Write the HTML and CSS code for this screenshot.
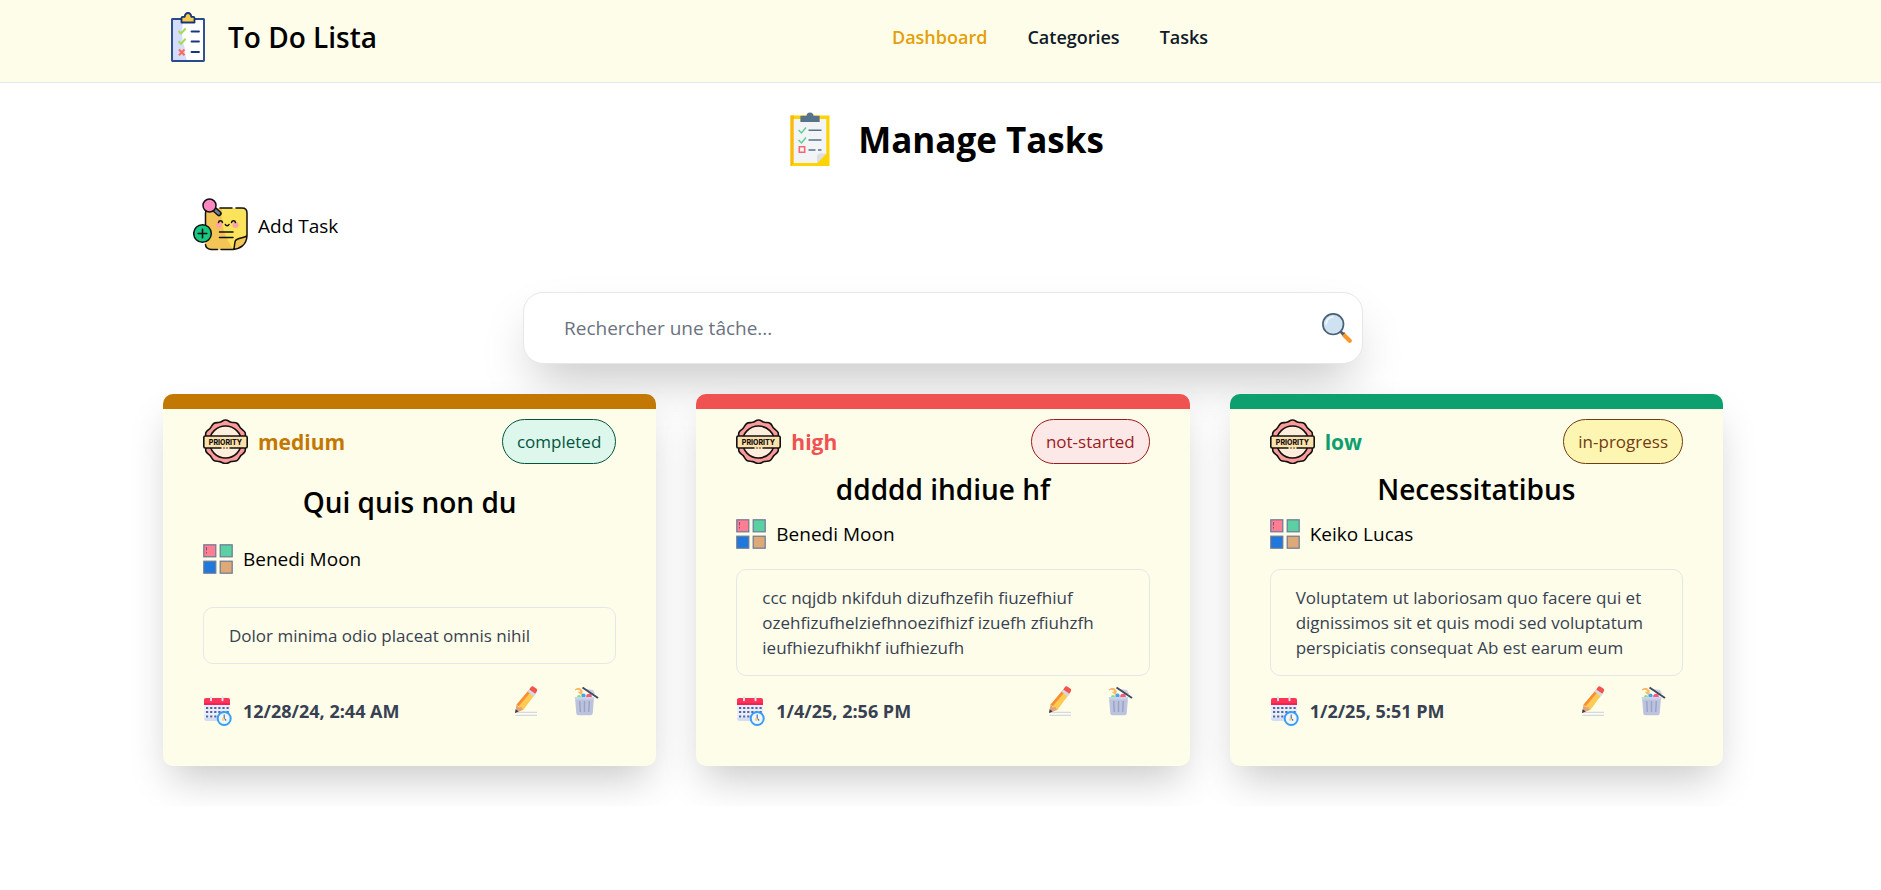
FILE: index.html
```html
<!DOCTYPE html>
<html lang="fr">
<head>
<meta charset="utf-8">
<meta name="viewport" content="width=device-width, initial-scale=1">
<title>To Do Lista</title>
<link rel="stylesheet" href="styles.css">
</head>
<body>
<svg class="sprite" aria-hidden="true">
  <symbol id="i-priority" viewBox="0 0 45 45">
    <path d="M22.500 1c2.600 0 3.600 1.800 5.800 2.300s4.300-.1 6 1.200 2 3.200 3.500 4.800 3.600 2.300 4.300 4.300-.2 3.700.3 5.600 1.600 2.200 1.600 3.800-1.100 2-1.600 3.800.4 3.700-.4 5.600-2.800 2.600-4.200 4.200-1.700 3.500-3.500 4.700-3.800.7-6 1.300-3.200 1.900-5.800 1.900-3.600-1.400-5.800-1.900-4.200 0-6-1.300-2.100-3.100-3.500-4.700-3.500-2.300-4.200-4.200.1-3.700-.4-5.600S1 25 1 23s1.100-2 1.600-3.800-.4-3.700.3-5.600 2.900-2.700 4.300-4.300 1.800-3.600 3.500-4.800 3.800-.7 6-1.200S19.900 1 22.500 1z" fill="#fd9a9a" stroke="#111" stroke-width="1.600"/>
    <circle cx="22.500" cy="23" r="16" fill="#ffeedb" stroke="#111" stroke-width="1.600"/>
    <rect x=".8" y="17" width="43.400" height="12" rx="1.500" fill="#ffe1ac" stroke="#111" stroke-width="1.600"/>
    <path d="M18.500 29h8" stroke="#ffe1ac" stroke-width="2"/><path d="M20.500 29h1M23.500 29h1" stroke="#111" stroke-width="1.600"/>
    <text x="22.500" y="25.500" text-anchor="middle" class="stamp">PRIORITY</text>
  </symbol>
  <symbol id="i-category" viewBox="0 0 30 30">
    <g stroke="#6c7894" stroke-width="1.200">
      <rect x=".8" y=".8" width="12" height="12" fill="#ff7e92"/>
      <rect x="17.200" y=".8" width="12" height="12" fill="#5bd0a3"/>
      <rect x=".8" y="17.200" width="12" height="12" fill="#2077dc"/>
      <rect x="17.200" y="17.200" width="12" height="12" fill="#dda977"/>
    </g>
    <path d="M3.500 3v3.500M3.500 8v1.500" stroke="#8d4f74"/>
  </symbol>
  <symbol id="i-calendar" viewBox="0 0 30 30">
    <path d="M1 8h26v14a3 3 0 0 1-3 3H4a3 3 0 0 1-3-3z" fill="#e9eefc"/>
    <path d="M1 22h20v3H4a3 3 0 0 1-3-3z" fill="#d5dcf6"/>
    <path d="M3 2h22a2 2 0 0 1 2 2v5H1V4a2 2 0 0 1 2-2z" fill="#fb3553"/>
    <path d="M1 7h26v2H1z" fill="#f5205a"/>
    <path d="M8 1.200v3M19.500 1.200v3" stroke="#dbe2f8" stroke-width="2" stroke-linecap="round"/>
    <path d="M3 12h23M3 16h23M3 20.500h12" stroke="#54649c" stroke-width="2.200" stroke-dasharray="2.200 1.900"/>
    <circle cx="21.200" cy="22.500" r="6.500" fill="#eef7ff" stroke="#389df5" stroke-width="2"/>
    <path d="M21.200 18.500v4l2 2" fill="none" stroke="#5c6c98" stroke-width="1.200"/>
    <circle cx="20.300" cy="23.500" r="1.400" fill="#ffd36b"/>
  </symbol>
  <symbol id="i-pencil" viewBox="0 0 30 30">
    <path d="M4.500 26.300h21.500M4.500 29.300h21.500" stroke="#c9cfe2"/>
    <path d="M5.500 18.700 18 4l6 4L12 24z" fill="#ffb042"/>
    <path d="M8 20.500 20.500 5.500 24 8 12 24z" fill="#ffcb52"/>
    <path d="M5.500 18.700 18 4l2 1.300L7.500 20z" fill="#f98d33"/>
    <path d="M5.500 18.700 4 27l8-3-1.500-3-2.500.3z" fill="#e3a575"/>
    <path d="M4.700 23.200 4 27l3.700-1.500z" fill="#334053"/>
    <path d="m16.500 5.700 1.800-2.300 6.400 4.500-1.900 2.500z" fill="#d2d8e8"/>
    <path d="m18.200 3.400 1.600-2.200c.7-1 1.800-1.200 2.800-.5l2.700 1.900c1 .8 1.200 1.800.5 2.800l-1.500 2.300z" fill="#f3544c"/>
  </symbol>
  <symbol id="i-trash" viewBox="0 0 30 30">
    <path d="m16 3 6 1 2 4-5 1z" fill="#cbd0de"/>
    <circle cx="8" cy="11" r="2" fill="#7be583"/><circle cx="12.500" cy="9.800" r="2.200" fill="#43a3f5"/><circle cx="18" cy="10.500" r="2.800" fill="#fb5b79"/>
    <path d="M4 11.500h19l-1.300 16a2 2 0 0 1-2 1.700H7.300a2 2 0 0 1-2-1.700z" fill="#bcc3de"/>
    <path d="M3.700 11h19.500v2.500H4z" fill="#ccd2e7"/>
    <path d="m8.700 15 .6 11M13.500 15v11M18.300 15l-.6 11" stroke="#9ba4c6" stroke-width="1.500"/>
    <path d="M11.500 1.500 27 12" stroke="#3d4a62" stroke-width="2"/>
    <path d="M4 4c3-1.500 5.500-.5 6 2.300l-2.500-.1 3 2.500.7-3.700C10 2 6.500 1.500 4 4z" fill="#ffb65c" stroke="#ffb65c"/>
  </symbol>
</svg>

<header class="header">
  <div class="container header__row">
    <a class="brand" href="#">
      <svg class="icon icon--50" viewBox="0 0 50 50" aria-hidden="true">
        <rect x="9" y="7" width="32" height="42" rx=".5" fill="#fff"/>
        <path d="M9 7h12c-3 10-2 22 .5 28 1 5 .5 10 3 14H9z" fill="#d4ddfb"/>
        <rect x="9" y="7" width="32" height="42" rx=".5" fill="none" stroke="#294b8c" stroke-width="1.900"/>
        <path d="M18.500 10.500V6q0-1.200 1.200-1.200h2C22 2.300 23 1 25 1s3 1.300 3.300 3.800h2q1.200 0 1.200 1.200v4.500z" fill="#f8ca4c" stroke="#163673" stroke-width="1.800" stroke-linejoin="round"/>
        <path d="m15.500 19 2.500 2.500 4.700-5M15.500 29.300l2.500 2.500 4.700-5" fill="none" stroke="#a7dc52" stroke-width="2"/>
        <path d="m16 37.500 5.500 5.700m0-5.700L16 43.200" stroke="#f96c5b" stroke-width="2"/>
        <path d="M28.500 19.500H36M28.500 29.500H36M28.500 40H36" stroke="#16387a" stroke-width="1.800" stroke-linecap="round"/>
      </svg>
      <span class="brand__name">To Do Lista</span>
    </a>
    <nav class="nav">
      <a class="nav__link nav__link--active" href="#">Dashboard</a>
      <a class="nav__link" href="#">Categories</a>
      <a class="nav__link" href="#">Tasks</a>
    </nav>
    <div></div>
  </div>
</header>

<main class="container">
  <div class="page-title">
    <svg class="icon icon--56" viewBox="0 0 56 56" aria-hidden="true">
      <path d="M8.500 4.500h39V55h-39z" fill="#fdd303"/>
      <path d="M8.500 4.500H12V52l-3.500 3z" fill="#fbb90d"/>
      <path d="M11.700 8h32.600v34.500L35 52H11.700z" fill="#f3f4f6"/>
      <path d="M44.300 42.500 35 52v-7.500l2-2z" fill="#dbdee2"/>
      <path d="M18.500 4.500h19V11h-19z" fill="#eda316"/>
      <path d="M18.500 5h6a3.500 3.500 0 1 1 7 0h6v6h-19z" fill="#55738b"/>
      <path d="m16.500 19 3 3L24 16.500M16.500 29l3 3 4.500-5.500" fill="none" stroke="#5fce94" stroke-width="1.500"/>
      <path d="M17.300 35.800h5.400v5.400h-5.400z" fill="none" stroke="#fb6470" stroke-width="1.500"/>
      <path d="M26.500 19.200h13M26.500 29h13M26.500 39h7M36 39h3.500" stroke="#55738b" stroke-width="1.600"/>
    </svg>
    <h1 class="page-title__text">Manage Tasks</h1>
  </div>

  <button class="add" type="button">
    <svg class="icon icon--55" viewBox="0 0 55 55" aria-hidden="true">
      <path d="M18 10h31q5 0 5 5v24c-1 8-6 12-14 12.500H18q-5.500-1-5.500-6V15q0-5 5.500-5z" fill="#fbe35b"/>
      <path d="M18 10h11c-1 8 0 22 5 30 2 5 4 8 6 11.500H18q-5.500-1-5.500-6V15q0-5 5.500-5z" fill="#f3c556"/>
      <path d="M40.500 51.500c1-2 .5-6 2-9 2-3 7-2 11.500-4.500-1 8-5 13-13.500 13.500z" fill="#f3c556"/>
      <path d="M27 10h12M43 10h6q5 0 5 5v23c-.5 9-7 13-14 13.500H28M24.500 51.500H18q-5.500-1-5.500-5M12.500 28V15q0-2 1.500-3.500M40.500 51.500c1.500-2 .5-6 2-9 2-3 7-2 11.500-4.500M26.500 34H40M26.500 39.500H40" fill="none" stroke="#111" stroke-width="1.500" stroke-linecap="round"/>
      <circle cx="26" cy="27" r="3" fill="#ffa2aa"/><circle cx="42.500" cy="27" r="3" fill="#ffa2aa"/>
      <path d="M25.500 24.500c.5-2.500 3.500-2.500 4 0M38.500 24.500c.5-2.500 3.500-2.500 4 0M32.300 26.500c.8 1.500 2.900 1.500 3.700 0" fill="none" stroke="#111" stroke-width="1.500" stroke-linecap="round"/>
      <path d="m21 11 5 4.500" stroke="#111" stroke-width="5.500" stroke-linecap="round"/><path d="m22.500 12.500 3.200 2.800" stroke="#71809a" stroke-width="2.800" stroke-linecap="round"/>
      <circle cx="16.500" cy="7.500" r="6.500" fill="#ff88c1" stroke="#111" stroke-width="1.500"/>
      <circle cx="9.500" cy="35.500" r="8.800" fill="#17c783" stroke="#111" stroke-width="1.500"/>
      <path d="M9.500 31.200v8.600M5.200 35.500h8.600" stroke="#111" stroke-width="1.600" stroke-linecap="round"/>
    </svg>
    <span>Add Task</span>
  </button>

  <form class="search" role="search">
    <input class="search__input" id="q" type="text" aria-label="Rechercher une tâche" placeholder="Rechercher une tâche...">
    <button class="search__btn" type="submit" aria-label="Rechercher">
      <svg class="icon icon--30" viewBox="0 0 30 30" aria-hidden="true">
        <path d="m18.500 18.500 3 3" stroke="#46596c" stroke-width="2.500"/>
        <path d="m22 22 5.700 5.700" stroke="#ff9428" stroke-width="4.200" stroke-linecap="round"/>
        <path d="m20 22 2.500-2.500" stroke="#46596c" stroke-width="1.500"/>
        <circle cx="11.200" cy="11.200" r="10.300" fill="#cfe2f1" stroke="#4a6075" stroke-width="1.700"/>
        <path d="M4.200 11a7 7 0 0 1 6.500-7" fill="none" stroke="#f3f9fd" stroke-width="1.600" stroke-linecap="round"/>
      </svg>
    </button>
  </form>

  <section class="cards">
    <article class="card card--medium">
      <div class="card__top">
        <span class="priority"><svg class="icon icon--45" aria-hidden="true"><use href="#i-priority"/></svg>medium</span>
        <span class="status status--done">completed</span>
      </div>
      <h2 class="card__title">Qui quis non du</h2>
      <p class="category"><svg class="icon icon--30" aria-hidden="true"><use href="#i-category"/></svg>Benedi Moon</p>
      <p class="card__text">Dolor minima odio placeat omnis nihil</p>
      <div class="card__foot">
        <time class="date"><svg class="icon icon--30" aria-hidden="true"><use href="#i-calendar"/></svg>12/28/24, 2:44 AM</time>
        <div class="actions">
          <button class="action" type="button" aria-label="Edit"><svg class="icon icon--30" aria-hidden="true"><use href="#i-pencil"/></svg></button>
          <button class="action" type="button" aria-label="Delete"><svg class="icon icon--30" aria-hidden="true"><use href="#i-trash"/></svg></button>
        </div>
      </div>
    </article>

    <article class="card card--high">
      <div class="card__top">
        <span class="priority"><svg class="icon icon--45" aria-hidden="true"><use href="#i-priority"/></svg>high</span>
        <span class="status status--todo">not-started</span>
      </div>
      <h2 class="card__title">ddddd ihdiue hf</h2>
      <p class="category"><svg class="icon icon--30" aria-hidden="true"><use href="#i-category"/></svg>Benedi Moon</p>
      <p class="card__text">ccc nqjdb nkifduh dizufhzefih fiuzefhiuf ozehfizufhelziefhnoezifhizf izuefh zfiuhzfh ieufhiezufhikhf iufhiezufh</p>
      <div class="card__foot">
        <time class="date"><svg class="icon icon--30" aria-hidden="true"><use href="#i-calendar"/></svg>1/4/25, 2:56 PM</time>
        <div class="actions">
          <button class="action" type="button" aria-label="Edit"><svg class="icon icon--30" aria-hidden="true"><use href="#i-pencil"/></svg></button>
          <button class="action" type="button" aria-label="Delete"><svg class="icon icon--30" aria-hidden="true"><use href="#i-trash"/></svg></button>
        </div>
      </div>
    </article>

    <article class="card card--low">
      <div class="card__top">
        <span class="priority"><svg class="icon icon--45" aria-hidden="true"><use href="#i-priority"/></svg>low</span>
        <span class="status status--doing">in-progress</span>
      </div>
      <h2 class="card__title">Necessitatibus</h2>
      <p class="category"><svg class="icon icon--30" aria-hidden="true"><use href="#i-category"/></svg>Keiko Lucas</p>
      <p class="card__text">Voluptatem ut laboriosam quo facere qui et dignissimos sit et quis modi sed voluptatum perspiciatis consequat Ab est earum eum</p>
      <div class="card__foot">
        <time class="date"><svg class="icon icon--30" aria-hidden="true"><use href="#i-calendar"/></svg>1/2/25, 5:51 PM</time>
        <div class="actions">
          <button class="action" type="button" aria-label="Edit"><svg class="icon icon--30" aria-hidden="true"><use href="#i-pencil"/></svg></button>
          <button class="action" type="button" aria-label="Delete"><svg class="icon icon--30" aria-hidden="true"><use href="#i-trash"/></svg></button>
        </div>
      </div>
    </article>
  </section>
</main>
</body>
</html>
```
FILE: styles.css
```css
*, *::before, *::after { box-sizing: border-box; }

body {
  margin: 0;
  background: #fff;
  color: #000;
  font-family: "Segoe UI", "Open Sans", "Noto Sans", sans-serif;
  font-size: 19px;
  line-height: 30px;
}

h1, h2, p { margin: 0; }
a { color: inherit; text-decoration: none; }
button, input { font: inherit; color: inherit; }
button { padding: 0; border: 0; background: none; cursor: pointer; }

.sprite { display: none; }
.stamp { font: 800 7px Inter, sans-serif; fill: #111; }

.icon { display: block; flex: none; }
.icon--30 { width: 30px; height: 30px; }
.icon--45 { width: 45px; height: 45px; }
.icon--50 { width: 50px; height: 50px; }
.icon--55 { width: 55px; height: 55px; }
.icon--56 { width: 56px; height: 56px; }

.container {
  width: 100%;
  max-width: 1605px;
  margin: 0 auto;
  padding: 0 20px 0 25px;
}

/* Header */
.header {
  padding: 12px 0 20px;
  border-bottom: 1px solid #e5e7eb;
  background: #fefde9;
}
.header__row { display: flex; align-items: center; justify-content: space-between; }
.brand { display: flex; align-items: center; gap: 15px; }
.brand__name { font-size: 28px; line-height: 40px; font-weight: 600; }
.nav { display: flex; gap: 40px; }
.nav__link { color: #111928; font-size: 18px; font-weight: 600; }
.nav__link--active { color: #e3a008; }

/* Page heading */
.page-title {
  display: flex;
  align-items: center;
  justify-content: center;
  gap: 20px;
  margin-top: 28px;
}
.page-title__text { font-size: 35px; line-height: 45px; font-weight: 700; }

.add {
  display: flex;
  align-items: center;
  gap: 10px;
  margin: 31px 0 0 30px;
}

/* Search */
.search {
  display: flex;
  align-items: center;
  width: 100%;
  max-width: 840px;
  margin: 39px auto 30px;
  padding: 0 10px 0 40px;
  border: 1px solid #e5e7eb;
  border-radius: 20px;
  background: #fff;
  box-shadow: 0 25px 50px -12px rgba(0, 0, 0, .25);
}
.search__input {
  flex: 1;
  min-width: 0;
  padding: 20px 0;
  border: 0;
  outline: 0;
  background: none;
  line-height: 30px;
}
.search__input::placeholder { color: #6b7280; opacity: 1; }

/* Cards */
.cards {
  display: grid;
  grid-template-columns: repeat(auto-fit, minmax(min(400px, 100%), 1fr));
  gap: 40px;
  padding-bottom: 40px;
}
.card {
  display: flex;
  flex-direction: column;
  justify-content: space-between;
  padding: 10px 40px 40px;
  border-top: 15px solid var(--accent);
  border-radius: 10px;
  background: #fefde9;
  box-shadow: 0 20px 40px -8px rgba(0, 0, 0, .22);
}
.card--medium { --accent: #c27803; }
.card--high { --accent: #f05252; }
.card--low { --accent: #0e9f6e; }

.card__top { display: flex; align-items: center; justify-content: space-between; }
.priority {
  display: flex;
  align-items: center;
  gap: 10px;
  color: var(--accent);
  font-size: 21px;
  font-weight: 700;
}
.status {
  padding: 9px 14px;
  border: 1px solid;
  border-radius: 23px;
  font-size: 17px;
  line-height: 25px;
}
.status--done { color: #03543f; background: #def7ec; }
.status--todo { color: #9b1c1c; background: #fde8e8; }
.status--doing { color: #723b13; background: #fdf6b2; }

.card__title {
  margin: 5px 0 10px;
  font-size: 28px;
  line-height: 40px;
  font-weight: 600;
  text-align: center;
}
.category { display: flex; align-items: center; gap: 10px; }
.card__text {
  margin-top: 20px;
  padding: 15px 25px;
  border: 1px solid #e5e7eb;
  border-radius: 10px;
  color: #374151;
  font-size: 17px;
  line-height: 25px;
}
.card__foot { display: flex; align-items: flex-end; justify-content: space-between; padding-top: 10px; }
.date {
  display: flex;
  align-items: center;
  gap: 10px;
  color: #374151;
  font-size: 18px;
  font-weight: 700;
}
.actions { display: flex; padding-bottom: 10px; }
.action { padding: 0 15px; }
```
